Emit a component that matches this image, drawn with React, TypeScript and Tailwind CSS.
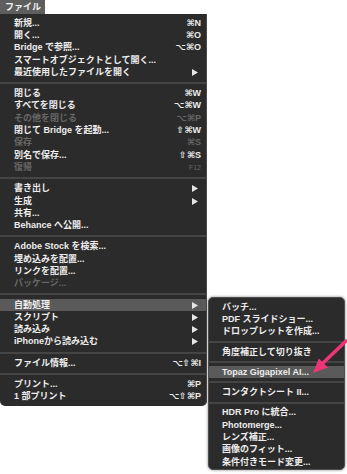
import React from "react";

type Item =
  | { sep: true }
  | { label: string; sc?: string; arrow?: boolean; dis?: boolean; hl?: boolean; small?: boolean; sep?: false };

const main: Item[] = [
  { label: "新規...", sc: "⌘N" },
  { label: "開く...", sc: "⌘O" },
  { label: "Bridge で参照...", sc: "⌥⌘O" },
  { label: "スマートオブジェクトとして開く..." },
  { label: "最近使用したファイルを開く", arrow: true },
  { sep: true },
  { label: "閉じる", sc: "⌘W" },
  { label: "すべてを閉じる", sc: "⌥⌘W" },
  { label: "その他を閉じる", sc: "⌥⌘P", dis: true },
  { label: "閉じて Bridge を起動...", sc: "⇧⌘W" },
  { label: "保存", sc: "⌘S", dis: true },
  { label: "別名で保存...", sc: "⇧⌘S" },
  { label: "復帰", sc: "F12", dis: true, small: true },
  { sep: true },
  { label: "書き出し", arrow: true },
  { label: "生成", arrow: true },
  { label: "共有..." },
  { label: "Behance へ公開..." },
  { sep: true },
  { label: "Adobe Stock を検索..." },
  { label: "埋め込みを配置..." },
  { label: "リンクを配置..." },
  { label: "パッケージ...", dis: true },
  { sep: true },
  { label: "自動処理", arrow: true, hl: true },
  { label: "スクリプト", arrow: true },
  { label: "読み込み", arrow: true },
  { label: "iPhoneから読み込む", arrow: true },
  { sep: true },
  { label: "ファイル情報...", sc: "⌥⇧⌘I" },
  { sep: true },
  { label: "プリント...", sc: "⌘P" },
  { label: "1 部プリント", sc: "⌥⇧⌘P" },
];

const sub: Item[] = [
  { label: "バッチ..." },
  { label: "PDF スライドショー..." },
  { label: "ドロップレットを作成..." },
  { sep: true },
  { label: "角度補正して切り抜き" },
  { sep: true },
  { label: "Topaz Gigapixel AI...", hl: true },
  { sep: true },
  { label: "コンタクトシート II..." },
  { sep: true },
  { label: "HDR Pro に統合..." },
  { label: "Photomerge..." },
  { label: "レンズ補正..." },
  { label: "画像のフィット..." },
  { label: "条件付きモード変更..." },
];

function Arrow() {
  return (
    <svg width="6" height="7" viewBox="0 0 6 7" className="mr-[3px] shrink-0">
      <polygon points="0,0 6,3.5 0,7" fill="#e6e6e6" />
    </svg>
  );
}

function Rows({ items, sepH, pl }: { items: Item[]; sepH: string; pl: string }) {
  return (
    <>
      {items.map((it, i) =>
        it.sep ? (
          <div key={i} className={`${sepH} flex items-center`}>
            <div className="h-[2px] w-full bg-[#454545]" />
          </div>
        ) : (
          <div
            key={i}
            className={`flex h-[12.3px] items-center ${pl} pr-[5px] ${it.hl ? "bg-[#5a5a5a]" : ""} ${
              it.dis ? "text-[#676767]" : "text-[#ededed]"
            }`}
          >
            <span className="whitespace-nowrap">{it.label}</span>
            <span className="flex-1" />
            {it.sc && (
              <span className={`whitespace-nowrap ${it.small ? "text-[7px] font-normal" : ""}`}>{it.sc}</span>
            )}
            {it.arrow && <Arrow />}
          </div>
        )
      )}
    </>
  );
}

export default function App() {
  return (
    <div className="relative h-[474px] w-[347px] overflow-hidden bg-white font-['Liberation_Sans','DejaVu_Sans','Noto_Sans_CJK_JP',sans-serif] text-[9px] font-bold leading-none">
      <div className="flex h-[14px] w-[45px] items-center bg-[#5e5e5e] pl-[5px] text-[9px] text-[#f0f0f0]">
        ファイル
      </div>
      <div className="w-[207px] rounded-b-[5px] border-r border-[#4a4a4a] bg-[#2b2b2b] pb-[3px] pt-[3px]">
        <Rows items={main} sepH="h-[9px]" pl="pl-[14px]" />
      </div>
      <div className="absolute left-[208px] top-[297px] w-[137px] rounded-[5px] border border-[#4d4d4d] bg-[#2b2b2b] pb-[1px] pt-[3px] shadow-[0_0_3px_rgba(0,0,0,0.5)]">
        <Rows items={sub} sepH="h-[8px]" pl="pl-[13px]" />
      </div>
      <svg className="absolute left-0 top-0" width="347" height="474" viewBox="0 0 347 474">
        <line x1="346" y1="341" x2="322" y2="364" stroke="#ec3677" strokeWidth="3.5" strokeLinecap="round" />
        <polygon points="313,373 328,367.5 318.8,358.5" fill="#ec3677" />
      </svg>
    </div>
  );
}
